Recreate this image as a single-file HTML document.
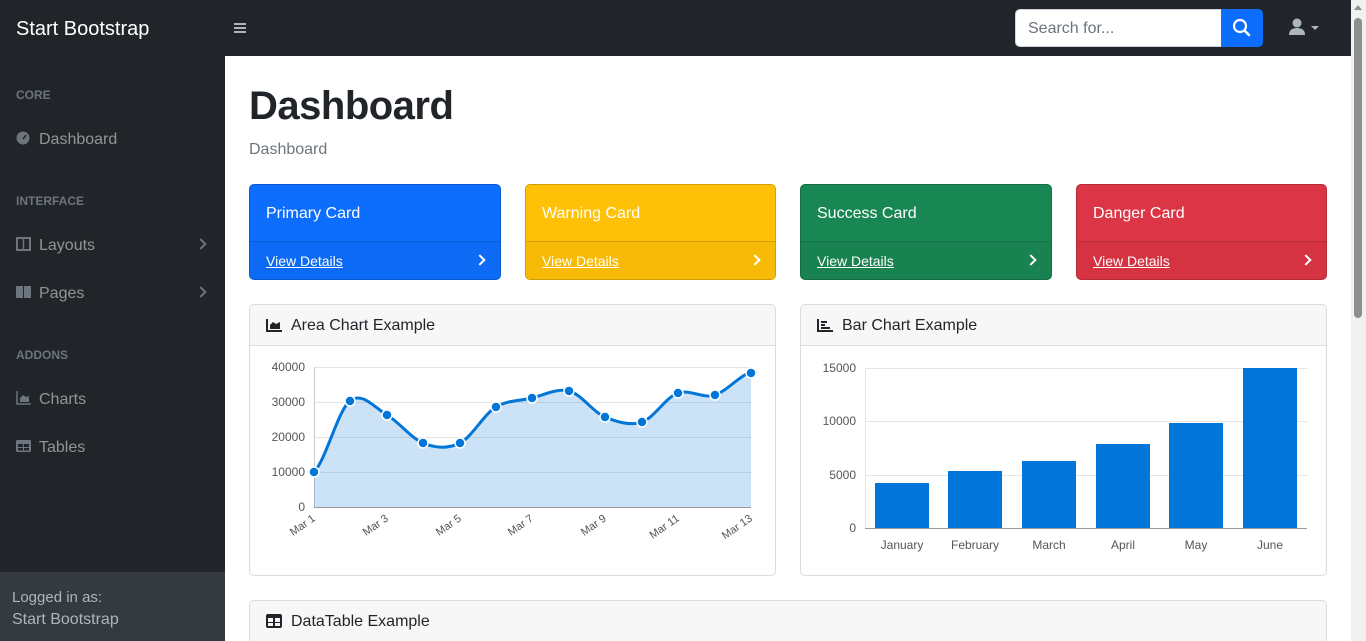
<!DOCTYPE html>
<html style="overflow:hidden;width:1366px;height:641px"><head><meta charset="utf-8"><style>
*{box-sizing:border-box;margin:0;padding:0}
body{width:1366px;height:641px;overflow:hidden;font-family:"Liberation Sans",sans-serif;background:#fff;position:relative}
.a{position:absolute}
.top{left:0;top:0;width:1351px;height:56px;background:#212529}
.side{left:0;top:56px;width:225px;height:585px;background:#212529}
.foot{left:0;top:572px;width:225px;height:69px;background:#343a40;color:#adb5bd;font-size:15px;padding:15px 12px;line-height:22px}
.hd{color:#6c757d;font-size:12px;font-weight:bold;left:16px}
.nav{color:rgba(255,255,255,.5);font-size:16px;left:39px}
.ic{left:16px;width:15px;height:14px}
.card{border-radius:5px;color:#fff;border:1px solid rgba(0,0,0,.18)}
.card .t{position:absolute;left:16px;top:20px;font-size:16px}
.card .f{position:absolute;left:0;right:0;top:56px;bottom:0;border-top:1px solid rgba(0,0,0,.15);background:rgba(0,0,0,.03);border-radius:0 0 5px 5px}
.card .f span{position:absolute;left:16px;top:11px;font-size:14px;text-decoration:underline}
.card .f i{position:absolute;right:16px;top:14px;width:8px;height:8px;border-top:2px solid #fff;border-right:2px solid #fff;transform:rotate(45deg)}
.box{border:1px solid #dcdcdc;border-radius:5px;overflow:hidden}
.box .h{height:41px;background:#f7f7f7;border-bottom:1px solid #dcdcdc;font-size:16px;color:#212529;padding:12px 0 0 41px;position:relative}
.chev{width:8px;height:8px;border-top:2px solid #6c757d;border-right:2px solid #6c757d;transform:rotate(45deg)}
</style></head><body>
<div class="a top"></div>
<div class="a" style="left:16px;top:18px;color:#fff;font-size:20px">Start Bootstrap</div>
<div class="a" style="left:234px;top:23px;width:12px;height:2px;background:#adb5bd;box-shadow:0 4px 0 #adb5bd,0 8px 0 #adb5bd"></div>
<div class="a" style="left:1015px;top:9px;width:207px;height:38px;background:#fff;border-radius:5px 0 0 5px;border:1px solid #ced4da;color:#6c757d;font-size:16px;padding:10px 12px 0">Search for...</div>
<div class="a" style="left:1221px;top:9px;width:42px;height:38px;background:#0d6efd;border-radius:0 5px 5px 0">
<svg width="42" height="38"><circle cx="19" cy="17" r="6" fill="none" stroke="#fff" stroke-width="2.2"/><line x1="23.5" y1="21.5" x2="28" y2="26" stroke="#fff" stroke-width="2.5" stroke-linecap="round"/></svg></div>
<svg class="a" style="left:1287px;top:18px" width="36" height="20"><circle cx="10" cy="5" r="4.5" fill="#adb5bd"/><path d="M2 17 Q2 10 10 10 Q18 10 18 17Z" fill="#adb5bd"/><path d="M24 8 L32 8 L28 12Z" fill="#adb5bd"/></svg>
<div class="a side"></div>
<div class="a hd" style="top:88px">CORE</div>
<svg class="a ic" style="top:131px"><circle cx="7" cy="7" r="6.5" fill="#6c757d"/><line x1="7" y1="8" x2="10" y2="4" stroke="#212529" stroke-width="1.5"/></svg>
<div class="a nav" style="top:131px">Dashboard</div>
<div class="a hd" style="top:194px">INTERFACE</div>
<svg class="a ic" style="top:237px"><rect x="1" y="1" width="13" height="12" fill="none" stroke="#6c757d" stroke-width="2"/><line x1="7.5" y1="1" x2="7.5" y2="13" stroke="#6c757d" stroke-width="1.5"/></svg>
<div class="a nav" style="top:237px">Layouts</div>
<div class="a chev" style="left:197px;top:240px"></div>
<svg class="a ic" style="top:285px"><rect x="0" y="1" width="7" height="12" fill="#6c757d"/><rect x="8" y="1" width="7" height="12" fill="#6c757d"/></svg>
<div class="a nav" style="top:285px">Pages</div>
<div class="a chev" style="left:197px;top:288px"></div>
<div class="a hd" style="top:348px">ADDONS</div>
<svg class="a ic" style="top:391px"><path d="M1 0V13H15" fill="none" stroke="#6c757d" stroke-width="1.5"/><path d="M4 11V7L7 4L10 6L13 5V11Z" fill="#6c757d"/></svg>
<div class="a nav" style="top:391px">Charts</div>
<svg class="a ic" style="top:439px"><rect x="0" y="1" width="15" height="12" rx="1.5" fill="#6c757d"/><rect x="2" y="5" width="5" height="3" fill="#212529"/><rect x="8" y="5" width="5" height="3" fill="#212529"/><rect x="2" y="9" width="5" height="2.5" fill="#212529"/><rect x="8" y="9" width="5" height="2.5" fill="#212529"/></svg>
<div class="a nav" style="top:439px">Tables</div>
<div class="a foot">Logged in as:<br><span style="font-size:16px">Start Bootstrap</span></div>

<div class="a" style="left:249px;top:84px;font-size:40px;color:#212529;font-weight:bold;letter-spacing:-0.5px">Dashboard</div>
<div class="a" style="left:249px;top:141px;font-size:16px;color:#6c757d">Dashboard</div>

<div class="a card" style="left:249px;top:184px;width:252px;height:96px;background:#0d6efd"><div class="t">Primary Card</div><div class="f"><span>View Details</span><i></i></div></div>
<div class="a card" style="left:525px;top:184px;width:251px;height:96px;background:#ffc107"><div class="t">Warning Card</div><div class="f"><span>View Details</span><i></i></div></div>
<div class="a card" style="left:800px;top:184px;width:252px;height:96px;background:#198754"><div class="t">Success Card</div><div class="f"><span>View Details</span><i></i></div></div>
<div class="a card" style="left:1076px;top:184px;width:251px;height:96px;background:#dc3545"><div class="t">Danger Card</div><div class="f"><span>View Details</span><i></i></div></div>

<div class="a box" style="left:249px;top:304px;width:527px;height:272px"><div class="h">
<svg style="position:absolute;left:16px;top:14px" width="16" height="13"><path d="M1 0V12H16" fill="none" stroke="#212529" stroke-width="2"/><path d="M4 10V6L7 3L10 5L14 3V10Z" fill="#212529"/></svg>Area Chart Example</div></div>
<div class="a box" style="left:800px;top:304px;width:527px;height:272px"><div class="h">
<svg style="position:absolute;left:16px;top:14px" width="16" height="13"><path d="M1 0V12H16" fill="none" stroke="#212529" stroke-width="2"/><rect x="4" y="2" width="6" height="2" fill="#212529"/><rect x="4" y="5" width="4" height="2" fill="#212529"/><rect x="4" y="8" width="9" height="2" fill="#212529"/></svg>Bar Chart Example</div></div>
<div class="a box" style="left:249px;top:600px;width:1078px;height:60px"><div class="h">
<svg style="position:absolute;left:16px;top:13px" width="16" height="14"><rect x="0" y="0" width="16" height="14" rx="2" fill="#212529"/><rect x="2" y="4" width="5" height="4" fill="#f7f7f7"/><rect x="9" y="4" width="5" height="4" fill="#f7f7f7"/><rect x="2" y="9" width="5" height="3" fill="#f7f7f7"/><rect x="9" y="9" width="5" height="3" fill="#f7f7f7"/></svg>DataTable Example</div></div>

<svg class="a" style="left:0;top:0" width="1351" height="641" font-family="Liberation Sans, sans-serif" font-size="12" fill="#555">
<g stroke="#e5e5e5" stroke-width="1">
<line x1="314" y1="367.5" x2="751" y2="367.5"/><line x1="314" y1="402.5" x2="751" y2="402.5"/><line x1="314" y1="437.5" x2="751" y2="437.5"/><line x1="314" y1="472.5" x2="751" y2="472.5"/>
<line x1="865" y1="368.5" x2="1307" y2="368.5"/><line x1="865" y1="421.5" x2="1307" y2="421.5"/><line x1="865" y1="475.5" x2="1307" y2="475.5"/>
</g>
<line x1="314.5" y1="367" x2="314.5" y2="507" stroke="#ccc"/><line x1="314" y1="507.5" x2="751" y2="507.5" stroke="#999"/>
<line x1="865.5" y1="368" x2="865.5" y2="528" stroke="#e5e5e5"/><line x1="865" y1="528.5" x2="1307" y2="528.5" stroke="#999"/>
<g text-anchor="end"><text x="305" y="371">40000</text><text x="305" y="406">30000</text><text x="305" y="441">20000</text><text x="305" y="476">10000</text><text x="305" y="511">0</text>
<text x="856" y="372">15000</text><text x="856" y="425">10000</text><text x="856" y="479">5000</text><text x="856" y="532">0</text></g>
<g text-anchor="end" font-size="11">
<text transform="translate(316,520) rotate(-35)">Mar 1</text><text transform="translate(389,520) rotate(-35)">Mar 3</text><text transform="translate(462,520) rotate(-35)">Mar 5</text><text transform="translate(534,520) rotate(-35)">Mar 7</text><text transform="translate(607,520) rotate(-35)">Mar 9</text><text transform="translate(680,520) rotate(-35)">Mar 11</text><text transform="translate(753,520) rotate(-35)">Mar 13</text></g>
<path d="M314,472 C326,460 338,410 350,401 C362,391 375,408 387,415 C399,422 411,438 423,443 C435,448 448,449 460,443 C472,437 484,414 496,407 C508,400 520,401 532,398 C544,395 557,388 569,391 C581,394 593,412 605,417 C617,422 630,426 642,422 C654,418 666,397 678,393 C690,389 703,399 715,395 C727,391 739,376 751,372 L751,507 L314,507Z" fill="rgba(2,117,216,.2)"/>
<path d="M314,472 C326,460 338,410 350,401 C362,391 375,408 387,415 C399,422 411,438 423,443 C435,448 448,449 460,443 C472,437 484,414 496,407 C508,400 520,401 532,398 C544,395 557,388 569,391 C581,394 593,412 605,417 C617,422 630,426 642,422 C654,418 666,397 678,393 C690,389 703,399 715,395 C727,391 739,376 751,372" fill="none" stroke="#0275d8" stroke-width="3"/>
<g fill="#0275d8" stroke="#fff" stroke-width="1.5">
<circle cx="314" cy="472" r="5"/><circle cx="350" cy="401" r="5"/><circle cx="387" cy="415" r="5"/><circle cx="423" cy="443" r="5"/><circle cx="460" cy="443" r="5"/><circle cx="496" cy="407" r="5"/><circle cx="532" cy="398" r="5"/><circle cx="569" cy="391" r="5"/><circle cx="605" cy="417" r="5"/><circle cx="642" cy="422" r="5"/><circle cx="678" cy="393" r="5"/><circle cx="715" cy="395" r="5"/><circle cx="751" cy="373" r="5"/></g>
<g fill="#0275d8">
<rect x="875" y="483" width="54" height="45"/><rect x="948" y="471" width="54" height="57"/><rect x="1022" y="461" width="54" height="67"/><rect x="1096" y="444" width="54" height="84"/><rect x="1169" y="423" width="54" height="105"/><rect x="1243" y="368" width="54" height="160"/></g>
<g text-anchor="middle"><text x="902" y="549">January</text><text x="975" y="549">February</text><text x="1049" y="549">March</text><text x="1123" y="549">April</text><text x="1196" y="549">May</text><text x="1270" y="549">June</text></g>
</svg>
<div class="a" style="left:1351px;top:0;width:15px;height:641px;background:#f1f1f1"></div>
<div class="a" style="left:1354px;top:18px;width:8px;height:300px;background:#8f8f8f;border-radius:4px"></div>
<div class="a" style="left:1354px;top:5px;width:0;height:0;border-left:4px solid transparent;border-right:4px solid transparent;border-bottom:5px solid #8f8f8f"></div>
</body></html>
